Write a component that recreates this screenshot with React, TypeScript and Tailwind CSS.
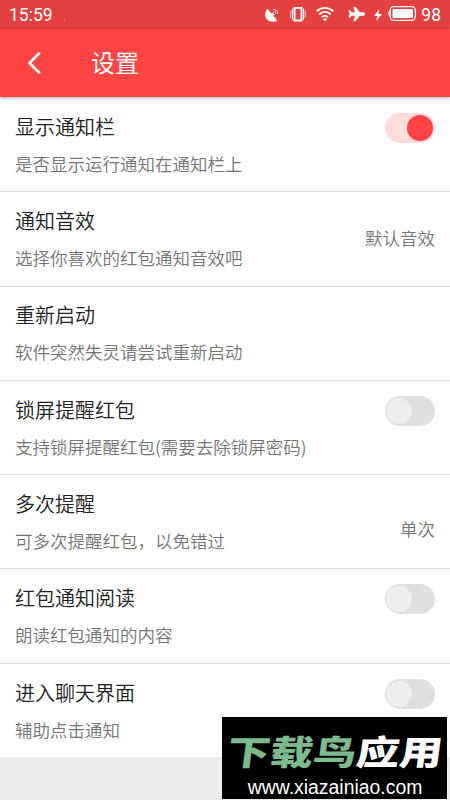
import type { ReactNode } from 'react'

type SettingItem = {
  title: string
  description: string
  control?: ReactNode
}

type ToggleProps = {
  checked?: boolean
}

function Toggle({ checked = false }: ToggleProps) {
  return (
    <button
      type="button"
      role="switch"
      aria-checked={checked}
      className={`mt-[14.8px] flex h-[30px] w-[50px] items-center self-start rounded-full ${
        checked ? 'justify-end bg-[#ffdcdc] px-[2px]' : 'justify-start bg-[#dfdfdf] px-[1px]'
      }`}
    >
      <span
        className={`size-[26px] rounded-full ${checked ? 'bg-[#ff4343]' : 'bg-[#eeeeee]'}`}
      />
    </button>
  )
}

const settings: SettingItem[] = [
  {
    title: '显示通知栏',
    description: '是否显示运行通知在通知栏上',
    control: <Toggle checked />,
  },
  {
    title: '通知音效',
    description: '选择你喜欢的红包通知音效吧',
    control: <span className="self-center pb-[2px] font-[350]">默认音效</span>,
  },
  { title: '重新启动', description: '软件突然失灵请尝试重新启动' },
  {
    title: '锁屏提醒红包',
    description: '支持锁屏提醒红包(需要去除锁屏密码)',
    control: <Toggle />,
  },
  {
    title: '多次提醒',
    description: '可多次提醒红包，以免错过',
    control: <span className="self-center pt-[15px] font-[350]">单次</span>,
  },
  {
    title: '红包通知阅读',
    description: '朗读红包通知的内容',
    control: <Toggle />,
  },
  {
    title: '进入聊天界面',
    description: '辅助点击通知',
    control: <Toggle />,
  },
]

function StatusBar() {
  return (
    <div className="flex h-[29px] items-center bg-[#e34040] pr-[9px] pl-[9px] text-white">
      <span className="pt-px font-['Roboto',sans-serif] text-[17.5px] leading-[28px]">15:59</span>
      <span className="ml-[11px] size-px translate-y-[5px] bg-white/60" />

      <svg viewBox="0 0 14 14" className="ml-auto size-[14px] shrink-0" fill="white">
        <path d="M2.6.8C-.8 4-.5 9.300 2.600 12c2.900 2.400 6.900 1.800 9-.8L8.200 7.900l1.500-1.500L7.900 4.500 6.300 5.400z" />
        <path d="M8.300 1.300c2.600 0 4.500 1.800 4.500 4.400M8.500 3.400c1.300 0 2.200.9 2.200 2.200" fill="none" stroke="white" strokeWidth="1" />
        <path d="M7.500 13.400h4.500L10 10.500z" />
      </svg>
      <svg viewBox="0 0 16 16" className="ml-[11px] size-[16px] shrink-0 -translate-y-px" fill="none" stroke="white">
        <rect x="4.500" y="2" width="7" height="12.500" strokeWidth="2" />
        <path d="M.8 4.500v7.500M2.500 2.500v11.500M13.500 2.500v11.500M15.200 4.500v7.500" strokeWidth="0.900" />
      </svg>
      <svg viewBox="0 0 18 16" className="ml-[10px] h-[16px] w-[18px] shrink-0 -translate-y-px" fill="none" stroke="white" strokeWidth="1.900">
        <path d="M.6 5.200c4.800-4.500 12-4.500 16.800 0M3.300 8.200c3.300-3.100 8.100-3.100 11.400 0M6 11.100c1.800-1.600 4.200-1.600 6 0" />
        <path d="M9 15.300l-2.200-2.400c1.300-1 3.100-1 4.400 0z" fill="white" stroke="none" />
      </svg>
      <svg viewBox="0 0 17 16" className="ml-[14px] h-[16px] w-[17px] shrink-0 -translate-y-px" fill="white">
        <path d="M17 8c0-1.100-.7-1.700-1.700-1.700h-3.600L7.600.8H5.200l1.700 5.500H3.800L2.200 4.200H.4L1.500 8 .4 11.800h1.800l1.600-2.100h3.100l-1.700 5.500h2.400l4.100-5.500h3.600c1 0 1.700-.6 1.700-1.700z" />
      </svg>
      <svg viewBox="0 0 8 12" className="ml-[9px] h-[12px] w-[8px] shrink-0" fill="white">
        <path d="M5.400 0L0 7h3.300L2.300 12 8 4.900H4.600z" />
      </svg>
      <svg viewBox="0 0 28 15" className="ml-[6px] h-[15px] w-[28px] shrink-0 -translate-y-px">
        <rect x="2.200" y="0.700" width="25.100" height="13.600" rx="3.500" fill="none" stroke="white" strokeWidth="1.300" />
        <rect x="4.500" y="2.900" width="20.500" height="9.200" rx="1.200" fill="white" />
        <path d="M2 4.500C-.2 5-.2 10 2 10.500z" fill="white" />
      </svg>
      <span className="ml-[5px] pt-px font-['Roboto',sans-serif] text-[17.5px] leading-[28px]">
        98
      </span>
    </div>
  )
}

function Header() {
  return (
    <header className="relative flex h-[68px] items-center bg-[#ff4444] pl-[27px] text-white shadow-[0_1px_3px_rgba(0,0,0,0.35)]">
      <svg viewBox="0 0 14 22" className="h-[22px] w-[14px]" fill="none" stroke="white" strokeWidth="2.600">
        <path d="M12 1.500L2.500 11l9.500 9.500" strokeLinecap="round" strokeLinejoin="round" />
      </svg>
      <h1 className="-mt-[2px] ml-[50px] text-[24px] leading-[36px]">设置</h1>
    </header>
  )
}

function SettingRow({ title, description, control }: SettingItem) {
  return (
    <li className="flex h-[94.3px] justify-between border-b border-[#dedede] px-[15px] text-[17.5px] text-[#757575] last:h-[93.3px] last:border-b-0">
      <div className="pt-[13.9px]">
        <h2 className="text-[20px] leading-[30px] font-[350] text-[#212121]">{title}</h2>
        <p className="mt-[9px] leading-[26px] font-[350] whitespace-nowrap">{description}</p>
      </div>
      {control}
    </li>
  )
}

function Watermark() {
  return (
    <div className="absolute top-[717px] left-[222px] flex h-[82px] w-[225px] flex-col items-center bg-black pt-[13px] text-white">
      <p className="origin-center translate-x-px -skew-x-6 scale-x-[1.18] scale-y-[0.94] text-[36.5px] leading-[42px] font-black whitespace-nowrap">
        <span className="text-[#7dbb8c]">下载鸟</span>应用
      </p>
      <p className="mt-[3px] translate-x-px scale-x-[0.97] font-['Liberation_Sans',Arial,sans-serif] text-[20px] leading-[24px]">
        www.xiazainiao.com
      </p>
    </div>
  )
}

export default function App() {
  return (
    <div className="relative h-[800px] w-[450px] overflow-hidden bg-[#ededed] font-['Noto_Sans_CJK_SC',sans-serif]">
      <StatusBar />
      <Header />
      <ul className="bg-white pt-px">
        {settings.map((item) => (
          <SettingRow key={item.title} {...item} />
        ))}
      </ul>
      <Watermark />
    </div>
  )
}
